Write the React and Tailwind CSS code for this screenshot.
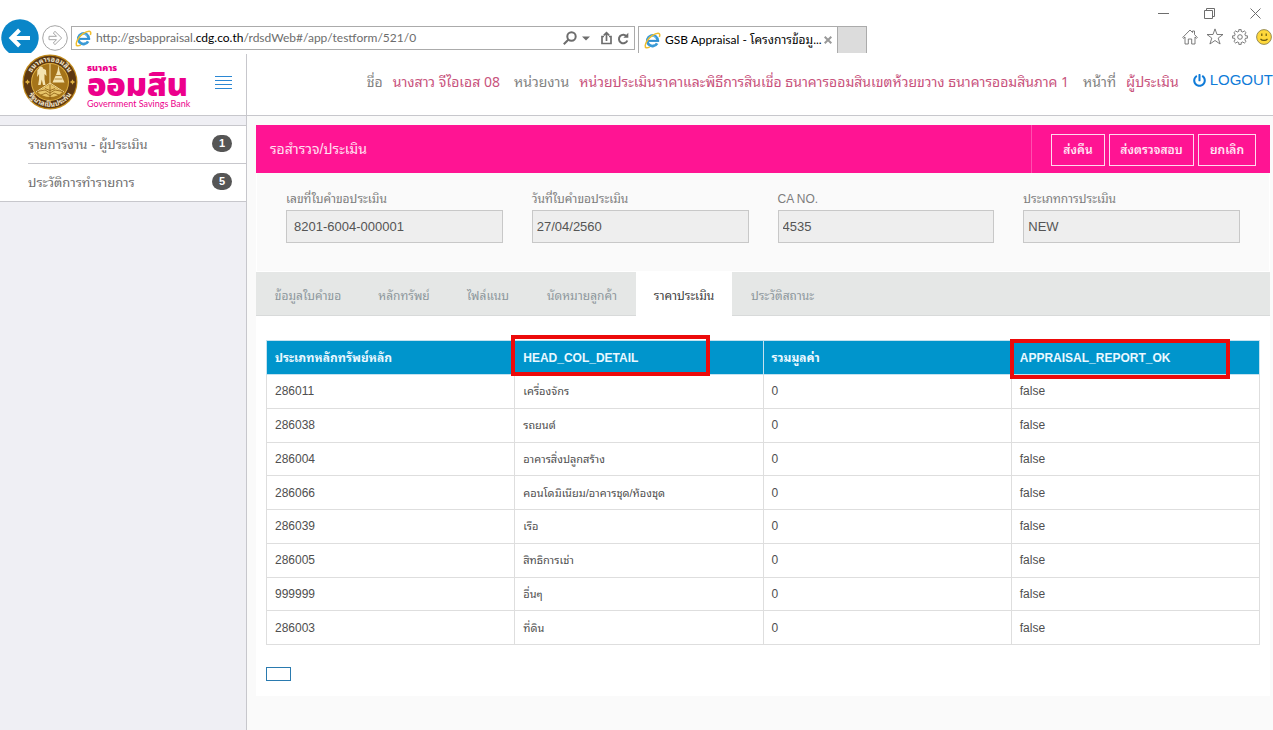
import React from "react";
import { FaPowerOff } from "react-icons/fa";

const latin = "font-['Liberation_Sans','Noto_Sans_Thai_Looped','Noto_Sans_Thai',sans-serif]";
const chromeFont = "font-['Lato','Noto_Sans_Thai_Looped','Noto_Sans_Thai',sans-serif]";

const rows = [
  ["286011", "เครื่องจักร"],
  ["286038", "รถยนต์"],
  ["286004", "อาคารสิ่งปลูกสร้าง"],
  ["286066", "คอนโดมิเนียม/อาคารชุด/ห้องชุด"],
  ["286039", "เรือ"],
  ["286005", "สิทธิการเช่า"],
  ["999999", "อื่นๆ"],
  ["286003", "ที่ดิน"],
];

const tabs = [
  { label: "ข้อมูลใบคำขอ", width: "w-[104px]" },
  { label: "หลักทรัพย์", width: "w-[88px]" },
  { label: "ไฟล์แนบ", width: "w-20" },
  { label: "นัดหมายลูกค้า", width: "w-[108px]" },
  { label: "ราคาประเมิน", width: "w-24", active: true },
  { label: "ประวัติสถานะ", width: "w-[101px]" },
];

const fields = [
  { id: "request-no", label: "เลขที่ใบคำขอประเมิน", value: "8201-6004-000001", pad: "px-[7px]" },
  { id: "request-date", label: "วันที่ใบคำขอประเมิน", value: "27/04/2560", pad: "px-1" },
  { id: "ca-no", label: "CA NO.", value: "4535", pad: "px-1" },
  { id: "type", label: "ประเภทการประเมิน", value: "NEW", pad: "px-1" },
];

function IeLogo({ className }) {
  return (
    <svg viewBox="0 0 18 18" className={className} aria-hidden="true">
      <path d="M14.6 9.6A5.6 5.6 0 1 0 13.9 12" fill="none" stroke="#3a9ad6" strokeWidth="3" />
      <path d="M4.400 9.400h11.600" stroke="#2f8fd0" strokeWidth="2.200" />
      <path d="M5 6.200A5 5 0 0 1 12.600 6" fill="none" stroke="#7cc4ec" strokeWidth="1" />
      <path d="M16.3 5.200c.8-2.200.4-3.800-1.300-3.900C11.500 1.200 5.600 5.300 3 9.800c-2 3.300-2.300 6.300-.6 6.900 1 .3 2.300-.1 3.700-.9" fill="none" stroke="#efbe2e" strokeWidth="1.600" />
    </svg>
  );
}

function Emblem() {
  return (
    <svg viewBox="0 0 56 56" className="size-14 shrink-0" aria-hidden="true">
      <defs>
        <path id="seal-top" d="M7.500 28A20.500 20.500 0 0 1 48.500 28" />
        <path id="seal-bottom" d="M3.200 28A24.800 24.800 0 0 0 52.800 28" />
      </defs>
      <circle cx="28" cy="28" r="27.500" fill="#c08a1c" />
      <circle cx="28" cy="28" r="26.300" fill="#5d3811" />
      <circle cx="28" cy="28" r="19" fill="#e0b040" />
      <circle cx="28" cy="28" r="18" fill="#a5741a" />
      <g fill="#f3e8d2" fontSize="7" fontWeight="700" textAnchor="middle">
        <text><textPath href="#seal-top" startOffset="50%">ธนาคารออมสิน</textPath></text>
        <text><textPath href="#seal-bottom" startOffset="50%">รัฐบาลเป็นประกัน</textPath></text>
      </g>
      <path d="M5.500 25.200l.9 1.900 1.900.9-1.900.9-.9 1.900-.9-1.900-1.900-.9 1.900-.9zM50.500 25.200l.9 1.900 1.900.9-1.900.9-.9 1.900-.9-1.900-1.900-.9 1.900-.9z" fill="#e0b040" />
      <path d="M28 10v20M28 29L14 38M28 29l14 9" stroke="#f0dca0" strokeWidth="1" />
      <path d="M36.500 11l1 6 1.500 4 1.500 3 2 4.500H30.500l2-4.500 1.500-3 1.500-4z" fill="#f4e3b0" />
      <path d="M33.500 21.500h6M32.500 25h8" stroke="#a5741a" strokeWidth=".8" />
      <path d="M17 14.500a2 2 0 0 1 4 0l3 1.500.5 6-2-2v5l1 6h-2.500l-1.200-5.500-1.200 5.500h-2.500l1-6v-5l-2 3 .3-7z" fill="#f4e3b0" />
      <path d="M28 30l6 3.500 6.500 4.500a18 18 0 0 1-25 0L22 33.500z" fill="#e7c468" />
      <path d="M15 37.500l8-1.500 5 3 5-3 8 1.500M19 41l5-2 4 3 4-3 5 2M23 34.500l5 2 5-2M28 31v14" fill="none" stroke="#8a5c12" strokeWidth=".8" />
    </svg>
  );
}

function Browser() {
  const icon = "fill-none stroke-[#6d6d6d]";
  return (
    <div className={`flex h-[54px] flex-col bg-white ${chromeFont}`}>
      <div className="flex h-[26px] shrink-0 items-center justify-end gap-[35px] pr-3">
        <button type="button" aria-label="Minimize">
          <svg viewBox="0 0 11 11" className={`size-[11px] ${icon}`}><path d="M0 5.500h11" /></svg>
        </button>
        <button type="button" aria-label="Restore">
          <svg viewBox="0 0 11 11" className={`size-[11px] ${icon}`}><path d="M.5 2.500h8v8h-8zM2.500 2.500v-2h8v8h-2" /></svg>
        </button>
        <button type="button" aria-label="Close">
          <svg viewBox="0 0 11 11" className={`size-[11px] ${icon}`}><path d="M.5.5l10 10M10.500.5l-10 10" /></svg>
        </button>
      </div>
      <div className="flex h-[27px] shrink-0 items-end">
        <button type="button" aria-label="Back" className="ml-px shrink-0">
          <svg viewBox="0 0 38 34" className="block h-[34px] w-[38px]">
            <path d="M8 34A18.700 18.700 0 1 1 30 34z" fill="#0a86c8" />
            <path d="M29 19H11.500M18.500 11l-8 8 8 8" fill="none" stroke="#fff" strokeWidth="4" />
          </svg>
        </button>
        <button type="button" aria-label="Forward" className="ml-[3px] self-center">
          <svg viewBox="0 0 26 26" className="-mt-1 block size-[26px] fill-none stroke-[#a5a5a5]">
            <circle cx="13" cy="13" r="12.300" />
            <path d="M6 11.300h7.500L10.300 8l1.700-1.600L18.700 13l-6.700 6.600-1.700-1.600 3.200-3.300H6z" transform="translate(1 0)" />
          </svg>
        </button>
        <div className="ml-[3px] flex h-6 w-[564px] items-center self-start border border-[#ababab] pr-[5px] pl-[3px]">
          <IeLogo className="size-[17px] shrink-0" />
          <p className="ml-1 flex-1 text-[12px] leading-5 whitespace-nowrap text-[#6d6d6d]">
            http://gsbappraisal.<span className="text-black">cdg.co.th</span>/rdsdWeb#/app/testform/521/0
          </p>
          <button type="button" aria-label="Search">
            <svg viewBox="0 0 14 14" className={`size-[14px] ${icon} stroke-2`}><circle cx="8.500" cy="5.500" r="4.200" /><path d="M5.500 8.500L.8 13.200" /></svg>
          </button>
          <svg viewBox="0 0 8 5" className="ml-[5px] h-[5px] w-2" aria-hidden="true"><path d="M0 .5h8L4 4.500z" fill="#6d6d6d" /></svg>
          <button type="button" aria-label="Share" className="ml-2.5">
            <svg viewBox="0 0 13 14" className={`h-[14px] w-[13px] ${icon}`}><path d="M4 5.500H2v7h9v-7H9M6.500 10V2M3.800 4.300L6.500 1.600l2.700 2.700" strokeWidth="1.700" /></svg>
          </button>
          <button type="button" aria-label="Refresh" className="ml-1">
            <svg viewBox="0 0 12 13" className={`h-[13px] w-3 ${icon} stroke-2`}><path d="M9.800 4.500A4.300 4.300 0 1 0 10.300 8.500" /><path d="M11.300.8v5H6.300z" fill="#6d6d6d" stroke="none" /></svg>
          </button>
        </div>
        <div className="ml-[3px] flex h-[27px] w-[200px] items-center border border-b-0 border-[#ababab] px-[5px]">
          <IeLogo className="size-[17px] shrink-0" />
          <span className="ml-1 flex-1 text-[12px] whitespace-nowrap text-black">GSB Appraisal - โครงการข้อมู...</span>
          <button type="button" aria-label="Close tab">
            <svg viewBox="0 0 8 8" className="size-2"><path d="M.7.7l6.600 6.600M7.300.7L.7 7.300" stroke="#999" strokeWidth="2" /></svg>
          </button>
        </div>
        <button type="button" aria-label="New tab" className="h-[27px] w-[29px] border border-b-0 border-l-0 border-[#ababab] bg-[#dcdcdc]" />
        <div className="mb-2 ml-auto flex items-center gap-2">
          <button type="button" aria-label="Home">
            <svg viewBox="0 0 16 16" className={`size-4 ${icon}`}><path d="M.7 8.500L8 1l2.500 2.500V2h2v3.500l2.800 3-.8.8-1.500-1.300v7H9.700V10H6.300v5H3V8L1.500 9.300z" strokeWidth=".9" /></svg>
          </button>
          <button type="button" aria-label="Favorites">
            <svg viewBox="0 0 18 17" className={`h-[17px] w-[18px] ${icon}`}><path d="M9 .9l2 5.600h6l-4.800 3.600 1.900 5.900L9 12.500 3.900 16l1.900-5.900L1 6.500h6z" strokeWidth=".9" /></svg>
          </button>
          <button type="button" aria-label="Tools">
            <svg viewBox="0 0 16 16" className={`size-4 ${icon}`}>
              <path d="M6.800 2.400V.6h2.400v1.800l1.700.7 1.300-1.300 1.900 1.900-1.300 1.300.7 1.800h1.900v2.400h-1.900l-.7 1.800 1.300 1.300-1.900 1.900-1.300-1.300-1.700.7v1.800H6.800v-1.800l-1.700-.7-1.300 1.300-1.900-1.900L3.200 11l-.7-1.800H.6V6.800h1.900L3.200 5 1.900 3.700l1.900-1.900 1.300 1.300z" strokeWidth=".9" />
              <circle cx="8" cy="8" r="2.300" strokeWidth=".9" />
            </svg>
          </button>
          <button type="button" aria-label="Feedback" className="mr-px">
            <svg viewBox="0 0 16 16" className="size-4"><circle cx="8" cy="8" r="7.400" fill="#ffd83b" stroke="#8c8250" strokeWidth=".9" /><path d="M5.800 4.500v2.600M10.200 4.500v2.600M4.500 9.800c1.500 2.200 5.500 2.200 7 0" fill="none" stroke="#6a5a10" strokeWidth="1.200" /></svg>
          </button>
        </div>
      </div>
    </div>
  );
}

function Header() {
  return (
    <header className="flex h-[62px] border-b border-[#c7c7cc] bg-white">
      <div className="flex w-[247px] shrink-0 border-r border-[#c7c7cc] pl-[22px]">
        <Emblem />
        <div className="ml-[9px] flex w-[103px] flex-col pt-2 text-[#ec008c] whitespace-nowrap">
          <span className="text-[9px] leading-3 font-black font-['Noto_Sans_Thai',sans-serif]">ธนาคาร</span>
          <span className="text-[32px] leading-6 font-black font-['Noto_Sans_Thai',sans-serif]">ออมสิน</span>
          <span className="text-[9px] leading-3 font-['Lato',sans-serif]">Government Savings Bank</span>
        </div>
        <button type="button" aria-label="Toggle menu" className="ml-[25px] flex h-14 flex-col items-stretch justify-center gap-[3px]">
          <span className="h-px w-[17px] bg-[#2b87d3]" />
          <span className="h-px w-[17px] bg-[#2b87d3]" />
          <span className="h-px w-[17px] bg-[#2b87d3]" />
          <span className="h-px w-[17px] bg-[#2b87d3]" />
        </button>
      </div>
      <div className="flex min-w-0 flex-1 items-center justify-end gap-3.5 pb-2 text-[14px] whitespace-nowrap text-[#828282] font-['Noto_Sans_Thai_Looped','Liberation_Sans',sans-serif]">
        <p className="flex gap-2.5">ชื่อ <span className="text-[#c8527c]">นางสาว จีไอเอส 08</span></p>
        <p className="flex gap-2.5">หน่วยงาน <span className="text-[#c8527c]">หน่วยประเมินราคาและพิธีการสินเชื่อ ธนาคารออมสินเขตห้วยขวาง ธนาคารออมสินภาค 1</span></p>
        <p className="flex gap-2.5">หน้าที่ <span className="text-[#c8527c]">ผู้ประเมิน</span></p>
        <a href="#logout" className="flex items-center gap-1 text-[15px] text-[#0f7bd8] font-['Liberation_Sans',sans-serif]"><FaPowerOff className="size-[13px]" />LOGOUT</a>
      </div>
    </header>
  );
}

function Sidebar() {
  const item = "flex h-[37px] flex-1 items-center justify-between pr-[14px] text-[#6f6f6f]";
  const badge = "mb-0.5 flex h-[17px] w-5 items-center justify-center rounded-full bg-[#555] text-[11px] font-bold text-white";
  return (
    <nav className="w-[247px] shrink-0 border-r border-[#c7c7cc] bg-[#efeff4] pt-[9px]">
      <ul className="border-y border-[#c7c7cc] bg-white pl-7 text-[13px]">
        <li className="border-b border-[#c7c7cc]"><a href="#work" className={item}>รายการงาน - ผู้ประเมิน<span className={badge}>1</span></a></li>
        <li><a href="#history" className={item}>ประวัติการทำรายการ<span className={badge}>5</span></a></li>
      </ul>
    </nav>
  );
}

function Main() {
  const action = "h-8 border border-[#ffd9ee] text-[12px] font-semibold whitespace-nowrap text-[#ffe6f4]";
  const cell = "border border-[#dedede] px-2 py-0";
  const head = "relative border border-[#c4e2ef] px-2 py-0 text-left font-bold";
  const mark = "pointer-events-none absolute border-4 border-[#ec0a0a]";
  return (
    <main className="min-w-0 flex-1 bg-[#fafafa] pt-[9px] pr-[3px] pl-[9px]">
      <div className="flex h-12 items-center bg-[#ff1493] text-white">
        <h1 className="flex-1 pl-3.5 text-[14px] text-[#ffe0f1]">รอสำรวจ/ประเมิน</h1>
        <div className="flex h-full items-center gap-1 border-l border-[#ff4fae] pt-0.5 pr-3.5 pl-[19px]">
          <button type="button" className={`${action} w-[54px]`}>ส่งคืน</button>
          <button type="button" className={`${action} w-[85px]`}>ส่งตรวจสอบ</button>
          <button type="button" className={`${action} w-[58px]`}>ยกเลิก</button>
        </div>
      </div>
      <form className="grid h-[99px] grid-cols-4 gap-[29px] border-x border-b border-white px-[29px] pt-4">
        {fields.map((f) => (
          <div key={f.id} className="flex flex-col">
            <label htmlFor={f.id} className="text-[12px] leading-[21px] text-[#7d7d7d]">{f.label}</label>
            <input id={f.id} readOnly defaultValue={f.value} className={`h-[33px] w-full border border-[#c8c8c8] bg-[#eee] text-[13px] text-[#555] ${f.pad}`} />
          </div>
        ))}
      </form>
      <div role="tablist" className="flex h-11 bg-[#e5e7e6] text-[12px]">
        {tabs.map((t) => (
          <button key={t.label} type="button" role="tab" aria-selected={!!t.active}
            className={`${t.width} pt-1 whitespace-nowrap ${t.active ? "bg-white text-[#3c3c3c]" : "border-b border-[#d8dada] text-[#8d979c]"}`}>
            {t.label}
          </button>
        ))}
        <span className="flex-1 border-b border-[#d8dada]" />
      </div>
      <section className="bg-white px-2.5 pt-6 pb-[15px]">
        <table className="h-[305px] w-full table-fixed border-collapse text-[12px] leading-4 text-[#4f4f4f]">
          <thead>
            <tr className="h-[34px] bg-[#0095cc] text-[#eaf8ff]">
              <th className={head}>ประเภทหลักทรัพย์หลัก</th>
              <th className={head}>HEAD_COL_DETAIL<span className={`${mark} -top-1.5 -left-1 h-[41px] w-[199px]`} /></th>
              <th className={head}>รวมมูลค่า</th>
              <th className={head}>APPRAISAL_REPORT_OK<span className={`${mark} -top-0.5 -left-0.5 h-10 w-[220px]`} /></th>
            </tr>
          </thead>
          <tbody>
            {rows.map(([id, name]) => (
              <tr key={id}>
                <td className={cell}>{id}</td>
                <td className={`${cell} text-[11px]`}>{name}</td>
                <td className={cell}>0</td>
                <td className={cell}>false</td>
              </tr>
            ))}
          </tbody>
        </table>
        <button type="button" aria-label="Page" className="mt-[22px] block h-3.5 w-[25px] border border-[#2a7aaf] bg-white" />
      </section>
    </main>
  );
}

export default function App() {
  return (
    <div className={`flex min-h-screen flex-col overflow-hidden bg-white ${latin}`}>
      <Browser />
      <Header />
      <div className="flex flex-1">
        <Sidebar />
        <Main />
      </div>
    </div>
  );
}
